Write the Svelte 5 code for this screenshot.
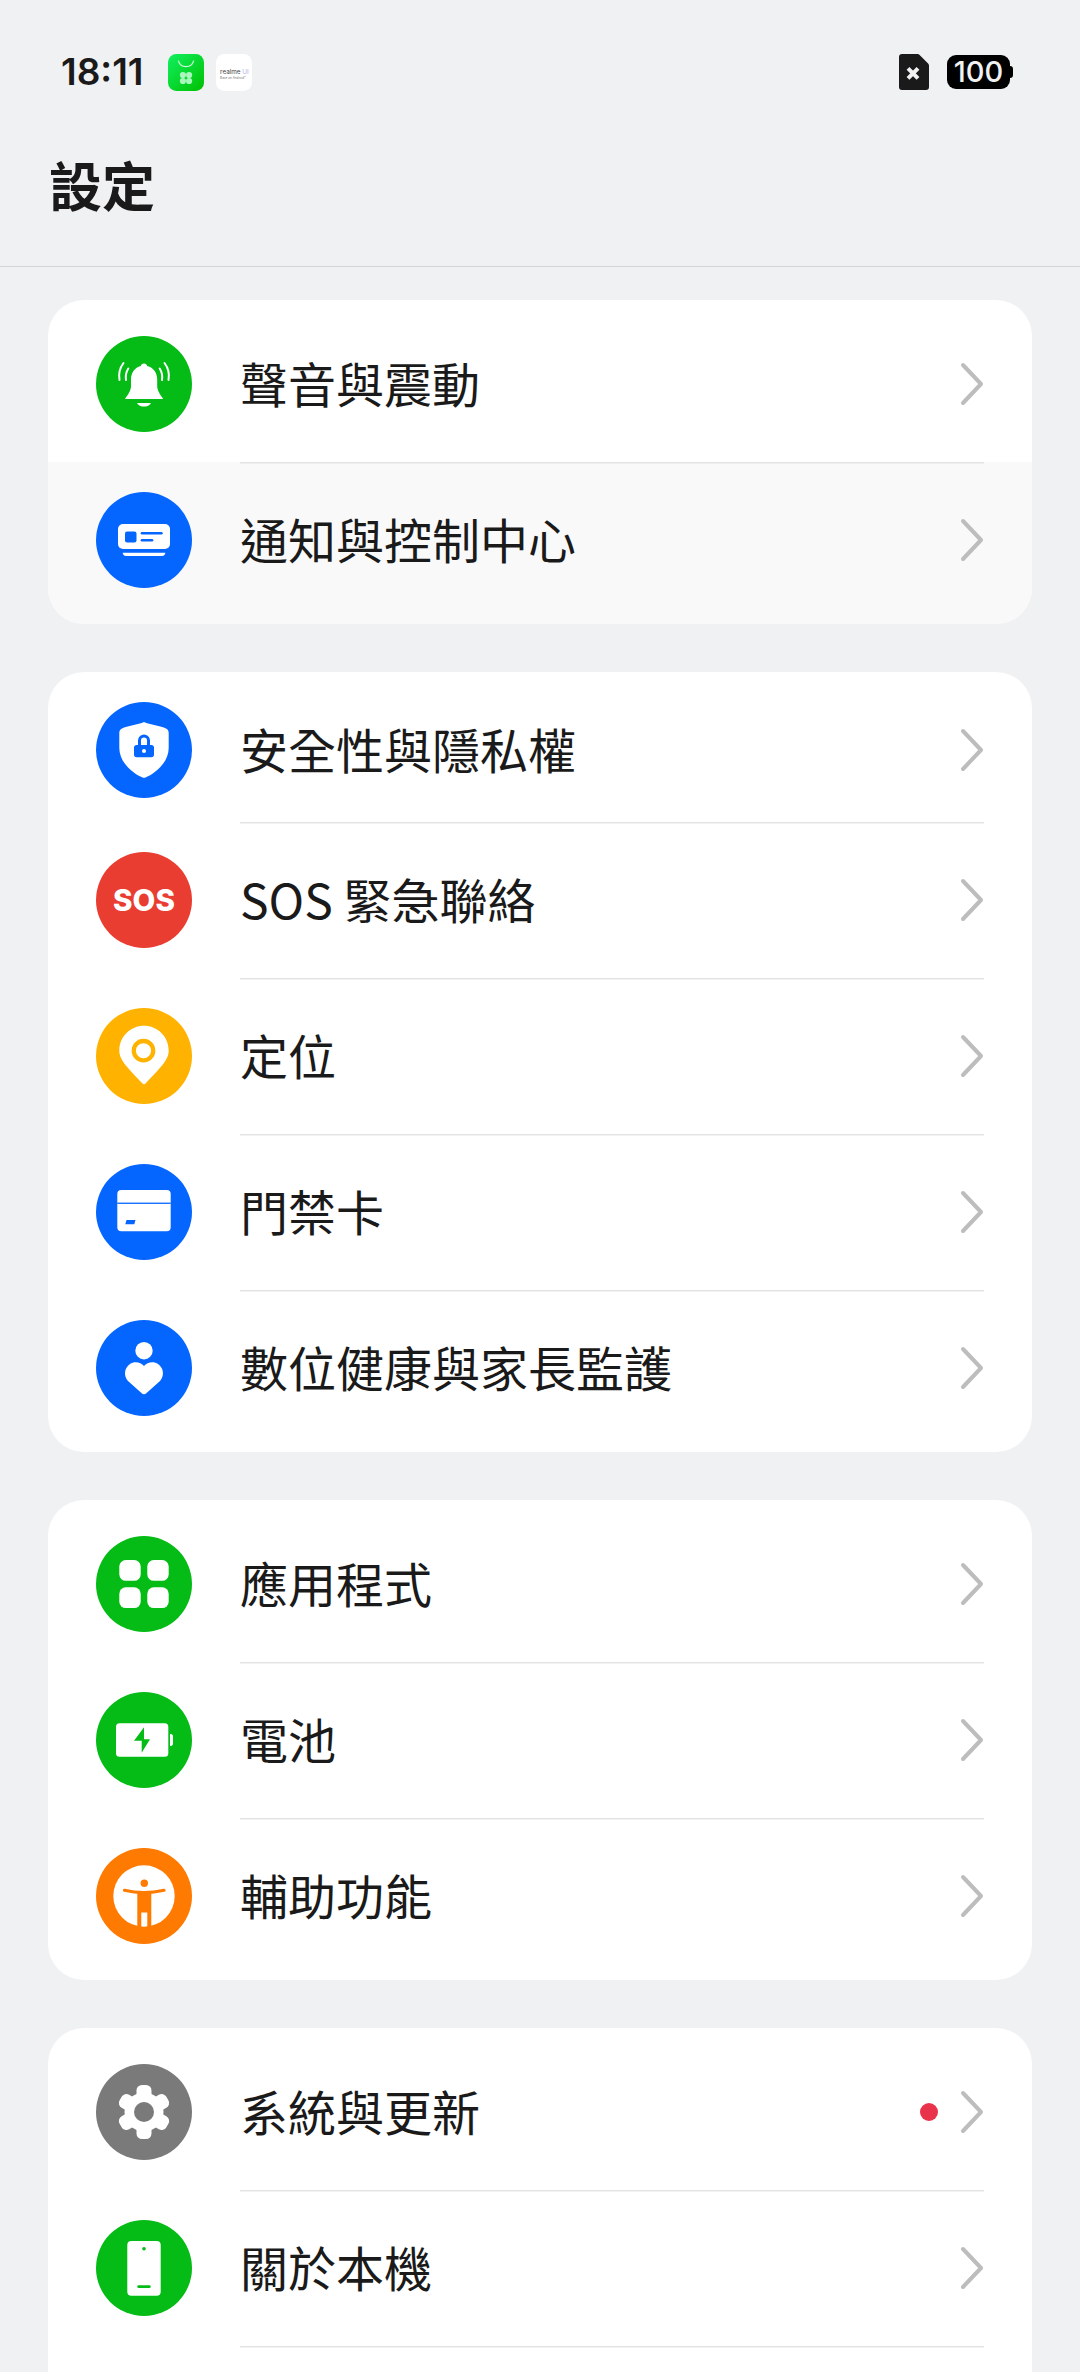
<script>
	const GREEN = '#05bb16'
	const BLUE = '#0566ff'

	const groups = [
		[
			{ label: '聲音與震動', icon: 'bell', color: GREEN },
			{ label: '通知與控制中心', icon: 'notice', color: BLUE, active: true }
		],
		[
			{ label: '安全性與隱私權', icon: 'shield', color: BLUE, short: true },
			{ label: 'SOS 緊急聯絡', icon: 'sos', color: '#ea3d32' },
			{ label: '定位', icon: 'pin', color: '#ffb300' },
			{ label: '門禁卡', icon: 'card', color: BLUE },
			{ label: '數位健康與家長監護', icon: 'family', color: BLUE }
		],
		[
			{ label: '應用程式', icon: 'apps', color: GREEN },
			{ label: '電池', icon: 'battery', color: GREEN },
			{ label: '輔助功能', icon: 'access', color: '#ff7a00' }
		],
		[
			{ label: '系統與更新', icon: 'gear', color: '#7a7a7a', dot: true },
			{ label: '關於本機', icon: 'phone', color: GREEN },
			{ label: '', icon: null }
		]
	]
</script>

<div class="page">
	<div class="status">
		<span class="time">18:11</span>
		<svg class="app" viewBox="0 0 35 36" width="36" height="37">
			<defs>
				<linearGradient id="store" x1="0" y1="0" x2="1" y2="1">
					<stop offset="0" stop-color="#10f060" />
					<stop offset="1" stop-color="#00c000" />
				</linearGradient>
			</defs>
			<rect width="35" height="36" rx="8" fill="url(#store)" />
			<path d="M10 6.500c1 3.600 4 5.800 7.500 5.800s6.500-2.200 7.500-5.800" fill="none" stroke="#c8fbd6" stroke-width="1.200" />
			<circle cx="14.500" cy="20.500" r="3" fill="#a8f7bc" />
			<circle cx="20.500" cy="20.500" r="3" fill="#a8f7bc" />
			<circle cx="14.500" cy="26.300" r="3" fill="#a8f7bc" />
			<circle cx="20.500" cy="26.300" r="3" fill="#a8f7bc" />
		</svg>
		<svg class="app" viewBox="0 0 35 36" width="36" height="37">
			<rect width="35" height="36" rx="8" fill="#fff" />
			<text x="4" y="19.500" font-size="6.200" fill="#444" font-family="Inter, sans-serif">realme <tspan fill="#b7aee0">UI</tspan></text>
			<text x="4" y="24.500" font-size="3" fill="#777" font-family="Inter, sans-serif">Base on Android™</text>
		</svg>
		<span class="grow"></span>
		<svg viewBox="0 0 30 36" width="30" height="36">
			<path d="M3 0h15.500a3 3 0 0 1 2.100.9l8.500 8.500a3 3 0 0 1 .9 2.100V33a3 3 0 0 1-3 3H3a3 3 0 0 1-3-3V3a3 3 0 0 1 3-3z" fill="#1a1a1a" />
			<path d="M9 14.300l10 10M19 14.300l-10 10" stroke="#f0f1f3" stroke-width="4" />
		</svg>
		<span class="level">100</span>
	</div>

	<header class="title">設定</header>

	<main class="list">
		{#each groups as rows}
			<section class="card">
				{#each rows as row}
					<div class="row" class:active={row.active}>
						<span class="badge" style:background={row.color} class:bare={!row.icon}>
							<svg viewBox="0 0 96 96" width="96" height="96">
								{#if row.icon === 'bell'}
									<path fill="#fff" d="M48 27.500c1.700 0 3 1 3.200 2.600 6.300 1.500 10 7 10 13.200v7c0 4 3 8.500 6 12.700H29c3-4.200 6-8.700 6-12.700v-7c0-6.200 3.700-11.700 9.800-13.200.2-1.600 1.500-2.600 3.200-2.600zM41 67h14c-1 2.500-4 3.600-7 3.600s-6-1.100-7-3.600z" />
									<g fill="none" stroke="#fff" stroke-width="2" stroke-linecap="round">
										<path d="M27.500 27c-3.800 5-5 11.500-4 17M32.300 32.500c-2.200 3.700-3 7.500-2.300 11.500" />
										<path d="M68.500 27c3.800 5 5 11.500 4 17M63.700 32.500c2.200 3.700 3 7.500 2.300 11.500" />
									</g>
								{:else if row.icon === 'notice'}
									<rect x="22" y="32" width="52" height="25" rx="5" fill="#fff" />
									<rect x="29" y="39.500" width="11.500" height="11" rx="2" fill={row.color} />
									<rect x="44.700" y="40" width="22" height="2.500" rx="1.200" fill={row.color} />
									<rect x="44.700" y="47" width="12.600" height="2.500" rx="1.200" fill={row.color} />
									<path d="M26.700 60.700h42.600c0 1.800-1.400 3.300-3.200 3.300H30c-1.900 0-3.300-1.500-3.300-3.300z" fill="#fff" />
								{:else if row.icon === 'shield'}
									<path fill="#fff" d="M48 20c5.500 2.500 17 4 22 6.500 1.800.9 2.700 2.500 2.700 4.500v15c0 14-12.700 25-23.200 29.500-1 .4-2 .4-3 0C36 71 23.300 60 23.300 46V31c0-2 .9-3.600 2.700-4.500C31 24 42.500 22.500 48 20z" />
									<path fill={row.color} d="M42 43v-4.500a6 6 0 0 1 12 0V43h1.500c1.400 0 2.500 1.100 2.500 2.500v7.300c0 1.400-1.100 2.500-2.500 2.500h-15c-1.400 0-2.500-1.100-2.500-2.500v-7.300c0-1.400 1.100-2.500 2.500-2.500zm3 0h6v-4.500a3 3 0 0 0-6 0z" />
									<circle cx="48" cy="49" r="2" fill="#fff" />
								{:else if row.icon === 'sos'}
									<text x="48" y="58.500" class="sos">SOS</text>
								{:else if row.icon === 'pin'}
									<path fill="#fff" d="M48 17.700c13.500 0 24.700 10.800 24.700 24.800 0 9.500-7.700 16.500-23.200 33-.8 1-2.200 1-3 0-15.500-16.500-23.200-23.500-23.200-33 0-14 11.200-24.800 24.700-24.800z" />
									<circle cx="47.500" cy="42.700" r="9.700" fill="none" stroke={row.color} stroke-width="4.300" />
								{:else if row.icon === 'card'}
									<rect x="21.300" y="26" width="53.400" height="41.300" rx="4" fill="#fff" />
									<rect x="21.300" y="38.600" width="53.400" height="1.300" fill={row.color} />
									<path d="M30.500 56h9l-1.200 4.300h-9z" fill={row.color} />
								{:else if row.icon === 'family'}
									<circle cx="48" cy="30.700" r="8.700" fill="#fff" />
									<path fill="#fff" d="M48 46c3-4 10-5 14-2 6 4 6.500 12 2 17L50 73.500c-1.200 1-2.800 1-4 0L32 61c-4.500-5-4-13 2-17 4-3 11-2 14 2z" />
								{:else if row.icon === 'apps'}
									<rect x="23.300" y="24" width="21.400" height="20.800" rx="6.500" fill="#fff" />
									<rect x="51.300" y="24" width="21.400" height="20.800" rx="6.500" fill="#fff" />
									<rect x="23.300" y="51.300" width="21.400" height="20.800" rx="6.500" fill="#fff" />
									<rect x="51.300" y="51.300" width="21.400" height="20.800" rx="6.500" fill="#fff" />
								{:else if row.icon === 'battery'}
									<rect x="20" y="31.300" width="52.300" height="33.400" rx="3.500" fill="#fff" />
									<path d="M74 42h.8c1.200 0 2.200 1 2.200 2.200v7.600c0 1.200-1 2.200-2.200 2.200H74z" fill="#fff" />
									<path d="M48 35.300L38 48.700h7.700v12L54 47.300h-6z" fill={row.color} />
								{:else if row.icon === 'access'}
									<circle cx="48" cy="48" r="30.700" fill="#fff" />
									<circle cx="48.300" cy="35.300" r="3.700" fill={row.color} />
									<path d="M28.500 42.300Q38 44.600 48 44.600T68 42.300" fill="none" stroke={row.color} stroke-width="3.200" stroke-linecap="round" />
									<path d="M41.300 43.500h14V80h-4V64.600h-6V80h-4z" fill={row.color} />
								{:else if row.icon === 'gear'}
									<g fill="#fff">
										{#each [0, 60, 120, 180, 240, 300] as deg}
											<rect x="40.500" y="21" width="15" height="16" rx="5.500" transform="rotate({deg} 48 48)" />
										{/each}
										<circle cx="48" cy="48" r="19.500" />
									</g>
									<circle cx="48" cy="48" r="10" fill={row.color} />
								{:else if row.icon === 'phone'}
									<rect x="31.300" y="21" width="33.400" height="54.700" rx="4" fill="#fff" />
									<circle cx="48" cy="28.700" r="1.800" fill={row.color} />
									<rect x="41.300" y="65.300" width="13.400" height="2.700" rx="1.300" fill={row.color} />
								{/if}
							</svg>
						</span>
						<div class="body" class:short={row.short}>
							<span class="label">{row.label}</span>
							{#if row.dot}<span class="dot"></span>{/if}
							{#if row.icon}
								<svg class="chevron" viewBox="0 0 24 44" width="24" height="44">
									<path d="M3 3l18 19L3 41" fill="none" stroke="#bdbdbd" stroke-width="4" stroke-linecap="round" stroke-linejoin="round" />
								</svg>
							{/if}
						</div>
					</div>
				{/each}
			</section>
		{/each}
	</main>
</div>

<style>
	:global(body) {
		background: #f0f1f3;
	}

	.page {
		height: 2372px;
		overflow: hidden;
		background: #f0f1f3;
		color: #1a1a1a;
		font-family: "Noto Sans CJK TC", "Noto Sans", sans-serif;
	}

	.status {
		display: flex;
		align-items: center;
		height: 36px;
		padding: 54px 70px 0 61px;
	}

	.time {
		width: 107px;
		font: 600 37px/36px Inter, sans-serif;
	}

	.app {
		margin-right: 12px;
	}

	.grow {
		flex: 1;
	}

	.level {
		position: relative;
		width: 63px;
		height: 34px;
		margin-left: 18px;
		border-radius: 9px;
		background: #000;
		color: #f0f1f3;
		font: 500 29px/34px Inter, sans-serif;
		text-align: center;
	}

	.level::after {
		content: "";
		position: absolute;
		left: 63px;
		top: 11px;
		width: 3px;
		height: 12px;
		border-radius: 0 3px 3px 0;
		background: #000;
	}

	.title {
		height: 177px;
		padding-left: 49px;
		border-bottom: 1.500px solid #d2d4d8;
		font-size: 53px;
		font-weight: 600;
		line-height: 188px;
		box-sizing: border-box;
	}

	.list {
		display: flex;
		flex-direction: column;
		gap: 48px;
		margin: 33px 48px 0;
	}

	.card {
		overflow: hidden;
		border-radius: 36px;
		background: #fff;
	}

	.row {
		display: flex;
		align-items: center;
		padding-left: 48px;
		padding-right: 48px;
	}

	.row:first-child {
		padding-top: 6px;
	}

	.row:last-child {
		padding-bottom: 6px;
	}

	.row.active {
		background: #f9f9fa;
	}

	.badge {
		flex: none;
		width: 96px;
		height: 96px;
		border-radius: 50%;
	}

	.badge svg {
		display: block;
	}

	.badge.bare {
		visibility: hidden;
	}

	.sos {
		fill: #fff;
		font: 800 29.500px Inter, sans-serif;
		text-anchor: middle;
	}

	.body {
		display: flex;
		flex: 1;
		align-items: center;
		height: 156px;
		margin-left: 48px;
		box-shadow: inset 0 1.500px 0 #e3e3e3;
	}

	.body.short {
		height: 144px;
	}

	.row:first-child .body {
		box-shadow: none;
	}

	.label {
		flex: 1;
		margin-bottom: 4px;
		font-size: 48px;
		line-height: 60px;
	}

	.dot {
		width: 18px;
		height: 18px;
		margin-right: 22px;
		border-radius: 50%;
		background: #e8334a;
	}
</style>
